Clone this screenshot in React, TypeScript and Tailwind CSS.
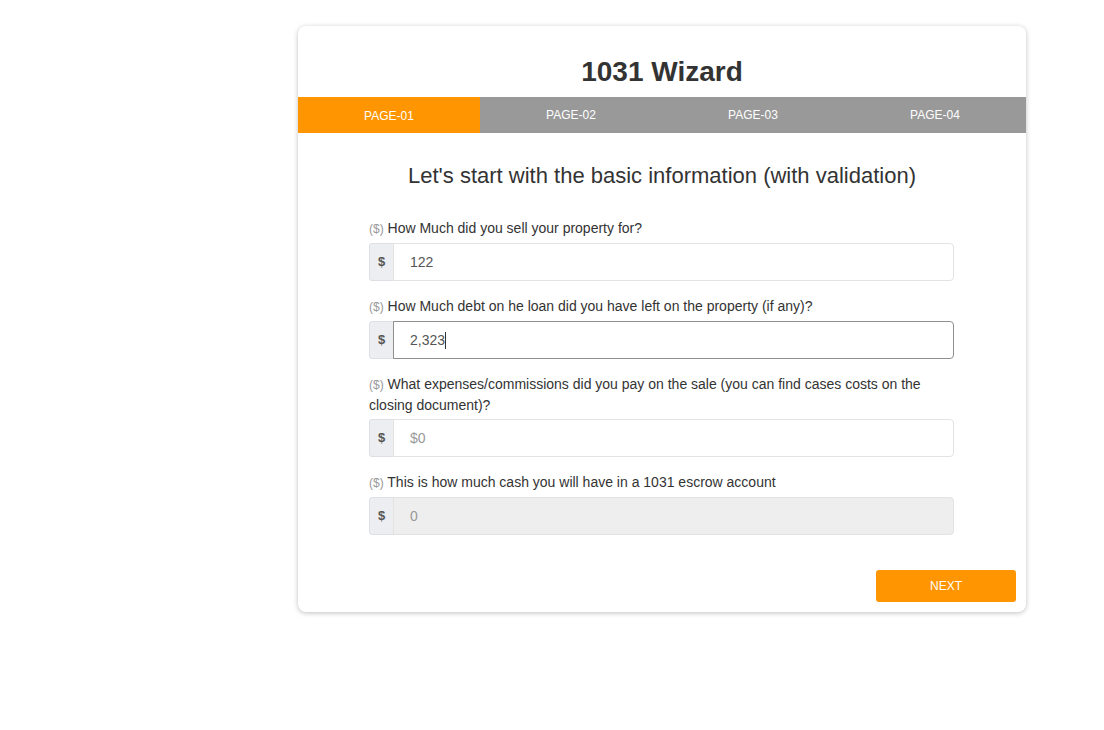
import { useState } from 'react';

const tabs = ['PAGE-01', 'PAGE-02', 'PAGE-03', 'PAGE-04'];

type Field = {
    label: string;
    value: string;
    placeholder?: string;
    focused?: boolean;
    disabled?: boolean;
};

const fields: Field[] = [
    { label: 'How Much did you sell your property for?', value: '122' },
    { label: 'How Much debt on he loan did you have left on the property (if any)?', value: '2,323', focused: true },
    {
        label: 'What expenses/commissions did you pay on the sale (you can find cases costs on the closing document)?',
        value: '',
        placeholder: '$0',
    },
    { label: 'This is how much cash you will have in a 1031 escrow account', value: '', placeholder: '0', disabled: true },
];

function MoneyInput({ field }: { field: Field }) {
    const [val, setVal] = useState(field.value);
    return (
        <div className="mb-[15px]">
            <label className="block text-[14px] leading-[20px] text-[#333] mb-[4px]">
                <span className="text-[12px] text-[#999]">($)</span> {field.label}
            </label>
            <div className="flex h-[38px]">
                {/* addon */}
                <span className="w-[25px] flex items-center justify-center bg-[#eceef1] border border-[#dcdfe3] rounded-l-[3px] text-[13px] font-bold text-[#555]">
                    $
                </span>
                <div
                    className={`flex-1 flex items-center border rounded-r-[4px] -ml-px ${
                        field.focused ? 'border-[#8f8f8f]' : 'border-[#e3e3e3]'
                    } ${field.disabled ? 'bg-[#eeeeee]' : 'bg-white'}`}
                >
                    {field.focused ? (
                        // focused field: text with a visible caret
                        <div className="pl-[16px] text-[14px] text-[#555] flex items-center">
                            {val}
                            <span className="inline-block w-px h-[17px] bg-[#333]" />
                        </div>
                    ) : (
                        <input
                            value={val}
                            onChange={(e) => setVal(e.target.value)}
                            placeholder={field.placeholder}
                            disabled={field.disabled}
                            className="w-full h-full bg-transparent outline-none pl-[16px] text-[14px] text-[#555] placeholder:text-[#999]"
                        />
                    )}
                </div>
            </div>
        </div>
    );
}

export default function App() {
    return (
        <div
            className="min-h-[730px] bg-white pl-[298px] pt-[26px]"
            style={{ fontFamily: '"Liberation Sans", Arial, sans-serif' }}
        >
            <div className="w-[728px] bg-white rounded-[8px] shadow-[0_1px_5px_rgba(0,0,0,0.25)] overflow-hidden">
                {/* ── Title ── */}
                <h1 className="text-[28px] leading-[32px] font-bold text-[#333] text-center pt-[30px] pb-[9px]">
                    1031 Wizard
                </h1>

                {/* ── Tabs ── */}
                <div className="grid grid-cols-4 h-[36px]">
                    {tabs.map((t, i) => (
                        <div
                            key={t}
                            className={`flex items-center justify-center text-[12px] text-white ${
                                i === 0 ? 'bg-[#ff9500] pt-[2px]' : 'bg-[#999999]'
                            }`}
                        >
                            {t}
                        </div>
                    ))}
                </div>

                {/* ── Body ── */}
                <div className="pt-[29px]">
                    <h2 className="text-[22px] leading-[28px] text-[#333] text-center">
                        Let's start with the basic information (with validation)
                    </h2>
                    <div className="w-[585px] ml-[71px] mt-[28px]">
                        {fields.map((f) => (
                            <MoneyInput key={f.label} field={f} />
                        ))}
                    </div>
                    <div className="flex justify-end pr-[10px] pt-[20px] pb-[10px]">
                        <button className="w-[140px] h-[32px] bg-[#ff9500] rounded-[3px] text-[12px] text-white">
                            NEXT
                        </button>
                    </div>
                </div>
            </div>
        </div>
    );
}
